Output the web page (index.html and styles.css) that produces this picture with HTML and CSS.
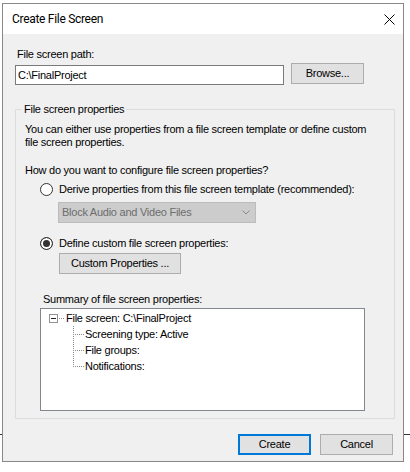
FILE: index.html
```html
<!DOCTYPE html>
<html lang="en">
<head>
    <meta charset="UTF-8">
    <title>Create File Screen</title>
    <link rel="stylesheet" href="styles.css">
</head>
<body>

    <div class="dialog">
        <div class="titlebar">
            <span class="title">Create File Screen</span>
            <svg class="close" width="11" height="11" viewBox="0 0 11 11">
                <path d="M0.5 0.5 L10.5 10.5 M10.5 0.5 L0.5 10.5" stroke="#000" stroke-width="1" fill="none"/>
            </svg>
        </div>

        <div class="content">
            <label class="field-label">File screen path:</label>
            <div class="path-row">
                <input class="textbox" type="text" value="C:\FinalProject">
                <button class="btn browse">Browse...</button>
            </div>

            <fieldset class="group">
                <legend>File screen properties</legend>
                <p class="intro">You can either use properties from a file screen template or define custom<br>file screen properties.</p>
                <p class="question">How do you want to configure file screen properties?</p>

                <div class="option first">
                    <span class="radio"></span>
                    <span>Derive properties from this file screen template (recommended):</span>
                </div>
                <div class="combo">
                    <span>Block Audio and Video Files</span>
                    <svg width="8" height="5" viewBox="0 0 8 5">
                        <polyline points="0.5,0.5 4,4 7.5,0.5" stroke="#8a8a8a" fill="none"/>
                    </svg>
                </div>

                <div class="option second">
                    <span class="radio checked"></span>
                    <span>Define custom file screen properties:</span>
                </div>
                <button class="btn custom">Custom Properties ...</button>

                <div class="summary-label">Summary of file screen properties:</div>
                <div class="tree">
                    <div class="tree-row root">
                        <svg width="17" height="16" viewBox="0 0 17 16">
                            <rect x="0.5" y="4.5" width="8" height="8" fill="#fff" stroke="#919191"/>
                            <line x1="2" y1="8.5" x2="7" y2="8.5" stroke="#222"/>
                            <line x1="10" y1="8.5" x2="16" y2="8.5" stroke="#8c8c8c" stroke-dasharray="1 1"/>
                        </svg>
                        <span>File screen: C:\FinalProject</span>
                    </div>
                    <div class="tree-row child">
                        <svg width="12" height="16" viewBox="0 0 12 16">
                            <line x1="0.5" y1="0" x2="0.5" y2="16" stroke="#8c8c8c" stroke-dasharray="1 1"/>
                            <line x1="2" y1="8.5" x2="11" y2="8.5" stroke="#8c8c8c" stroke-dasharray="1 1"/>
                        </svg>
                        <span>Screening type: Active</span>
                    </div>
                    <div class="tree-row child">
                        <svg width="12" height="16" viewBox="0 0 12 16">
                            <line x1="0.5" y1="0" x2="0.5" y2="16" stroke="#8c8c8c" stroke-dasharray="1 1"/>
                            <line x1="2" y1="8.5" x2="11" y2="8.5" stroke="#8c8c8c" stroke-dasharray="1 1"/>
                        </svg>
                        <span>File groups:</span>
                    </div>
                    <div class="tree-row child">
                        <svg width="12" height="16" viewBox="0 0 12 16">
                            <line x1="0.5" y1="0" x2="0.5" y2="9" stroke="#8c8c8c" stroke-dasharray="1 1"/>
                            <line x1="2" y1="8.5" x2="11" y2="8.5" stroke="#8c8c8c" stroke-dasharray="1 1"/>
                        </svg>
                        <span>Notifications:</span>
                    </div>
                </div>
            </fieldset>

            <div class="actions">
                <button class="btn default">Create</button>
                <button class="btn">Cancel</button>
            </div>
        </div>
    </div>

</body>
</html>
```

FILE: styles.css
```css
body {
    margin: 0;
    /* edge of the window behind the dialog */
    background: linear-gradient(#fff 434px, #333 434px, #333 435px, #fff 435px);
    font-family: "Liberation Sans", Arial, sans-serif;
    font-size: 11px;
    letter-spacing: -0.25px;
    color: #000;
}
.dialog {
    box-sizing: border-box;
    width: 402px;
    height: 459px;
    margin: 3px 0 0 2px;
    border: 1px solid #888;
    background: #f0f0f0;
    display: flex;
    flex-direction: column;
}
.titlebar {
    height: 30px;
    flex-shrink: 0;
    background: #fff;
    display: flex;
    align-items: center;
    justify-content: space-between;
    padding: 0 8px 0 9px;
}
.title {
    font-family: Roboto, sans-serif;
    font-size: 12px;
    letter-spacing: -0.3px;
}
.content {
    flex-grow: 1;
    padding: 14px 10px 0 12px;
    display: flex;
    flex-direction: column;
}
.field-label {
    display: block;
    line-height: 13px;
    padding-left: 2px;
}
.path-row {
    display: flex;
    align-items: flex-start;
    margin-top: 4px;
}
.textbox {
    box-sizing: border-box;
    width: 269px;
    height: 20px;
    margin: 0;
    padding: 0 2px;
    border: 1px solid #7a7a7a;
    background: #fff;
    font: inherit;
    letter-spacing: inherit;
    line-height: 13px;
    color: #000;
    outline: none;
}
.btn {
    box-sizing: border-box;
    height: 21px;
    width: 73px;
    margin: 0;
    padding: 0;
    background: #e1e1e1;
    border: 1px solid #adadad;
    font: inherit;
    letter-spacing: inherit;
    line-height: 13px;
    color: #000;
}
.browse {
    margin-left: 7px;
    margin-top: -2px;
}
.group {
    box-sizing: border-box;
    width: 380px;
    min-width: 0;
    margin: 18px 0 0;
    padding: 0 0 7px 0;
    border: 1px solid #dcdcdc;
}
.group legend {
    margin-left: 6px;
    padding: 0 2px;
    line-height: 13px;
}
.intro,
.question {
    margin: 0 0 0 9px;
    line-height: 13px;
}
.intro {
    margin-top: 7px;
}
.question {
    margin-top: 15px;
}
.option {
    display: flex;
    align-items: center;
    gap: 6px;
    height: 13px;
    line-height: 13px;
    margin-left: 24px;
}
.option.first {
    margin-top: 6px;
}
.option.second {
    margin-top: 14px;
}
.radio {
    box-sizing: border-box;
    width: 13px;
    height: 13px;
    border: 1px solid #333;
    border-radius: 50%;
    background: #fff;
}
.radio.checked {
    background: #333;
    box-shadow: inset 0 0 0 2px #fff;
}
.combo {
    box-sizing: border-box;
    width: 198px;
    height: 21px;
    margin: 6px 0 0 42px;
    padding: 0 5px 0 3px;
    background: #ccc;
    border: 1px solid #bcbcbc;
    color: #6d6d6d;
    display: flex;
    align-items: center;
    justify-content: space-between;
    line-height: 13px;
}
.custom {
    display: block;
    width: 122px;
    margin: 3px 0 0 43px;
}
.summary-label {
    margin: 19px 0 0 27px;
    line-height: 13px;
}
.tree {
    box-sizing: border-box;
    width: 325px;
    height: 103px;
    margin: 2px 0 0 24px;
    padding-top: 1px;
    background: #fff;
    border: 1px solid #828790;
}
.tree-row {
    display: flex;
    align-items: center;
    height: 16px;
    line-height: 16px;
}
.tree-row.root {
    margin-left: 8px;
}
.tree-row.child {
    padding-left: 32px;
}
.actions {
    display: flex;
    justify-content: flex-end;
    gap: 9px;
    margin-top: 15px;
}
.btn.default {
    border: 2px solid #0078d7;
}
```
